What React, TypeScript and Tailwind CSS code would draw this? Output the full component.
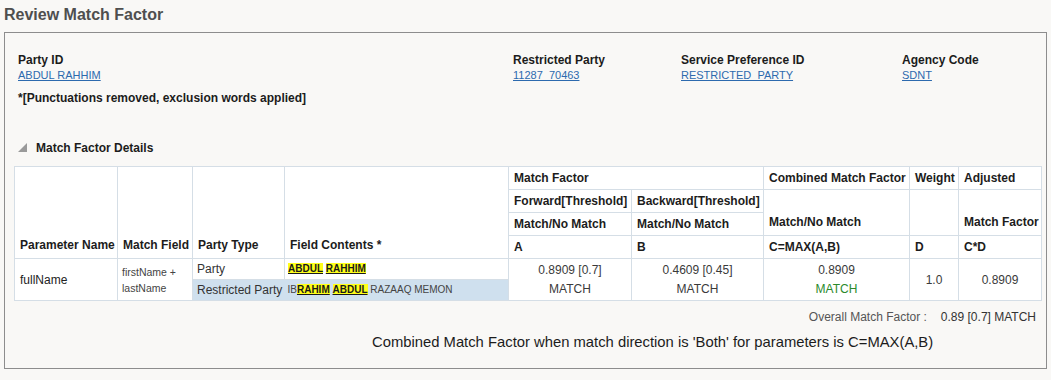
import React from "react";

const hl = "bg-[#ffff1a] font-bold underline text-[#1a1a1a] text-[10px]";

function Field({ label, value }: { label: string; value: string }) {
  return (
    <div className="flex flex-col">
      <span className="text-[12px] leading-[15px] font-bold text-[#1c1c1c]">{label}</span>
      <a href="#" className="text-[11px] leading-[14px] text-[#2d6aae] underline">
        {value}
      </a>
    </div>
  );
}

export default function App() {
  const th =
    "border border-[#d5dee6] bg-white pl-[5px] pr-0 text-left font-bold text-[12px] text-[#1c1c1c] align-bottom whitespace-nowrap overflow-visible";
  const td = "border border-[#d5dee6] bg-white";
  const num = td + " text-center text-[12px] text-[#3a3a3a]";

  return (
    <div className="w-full h-[380px] bg-[#f9f8f6] px-[4px] font-['Liberation_Sans',Arial,sans-serif] overflow-hidden">
      <div className="h-[32px] flex items-center pb-[2px]">
        <h1 className="text-[16px] font-bold text-[#4f4f4f]">Review Match Factor</h1>
      </div>

      <div className="w-[1043px] h-[337px] border border-[#8d8d8d] bg-[#f9f8f6] flex flex-col">
        <div className="flex pt-[20px] pl-[13px]">
          <div className="w-[495px]">
            <Field label="Party ID" value="ABDUL RAHHIM" />
          </div>
          <div className="w-[168px]">
            <Field label="Restricted Party" value="11287_70463" />
          </div>
          <div className="w-[221px]">
            <Field label="Service Preference ID" value="RESTRICTED_PARTY" />
          </div>
          <div>
            <Field label="Agency Code" value="SDNT" />
          </div>
        </div>

        <p className="pl-[13px] mt-[9px] text-[12px] leading-[14px] font-bold text-[#1c1c1c]">
          *[Punctuations removed, exclusion words applied]
        </p>

        <div className="flex items-center gap-[9px] pl-[13px] mt-[35px] h-[15px]">
          <svg width="9" height="9" viewBox="0 0 9 9">
            <polygon points="9,0 9,9 0,9" fill="#9a9a9a" />
          </svg>
          <span className="text-[12px] font-bold text-[#1c1c1c]">Match Factor Details</span>
        </div>

        <table className="ml-[9px] mt-[11px] w-[1027px] table-fixed border-collapse">
          <colgroup>
            <col className="w-[103px]" />
            <col className="w-[75px]" />
            <col className="w-[92px]" />
            <col className="w-[224px]" />
            <col className="w-[123px]" />
            <col className="w-[132px]" />
            <col className="w-[146px]" />
            <col className="w-[49px]" />
            <col className="w-[83px]" />
          </colgroup>
          <thead>
            <tr className="h-[23px]">
              <th rowSpan={4} className={th + " pb-[4px]"}>Parameter Name</th>
              <th rowSpan={4} className={th + " pb-[4px]"}>Match Field</th>
              <th rowSpan={4} className={th + " pb-[4px]"}>Party Type</th>
              <th rowSpan={4} className={th + " pb-[4px]"}>Field Contents *</th>
              <th colSpan={2} className={th + " align-middle"}>Match Factor</th>
              <th className={th + " align-middle"}>Combined Match Factor</th>
              <th className={th + " align-middle"}>Weight</th>
              <th className={th + " align-middle"}>Adjusted</th>
            </tr>
            <tr className="h-[23px]">
              <th className={th + " align-middle"}>Forward[Threshold]</th>
              <th className={th + " align-middle"}>Backward[Threshold]</th>
              <th rowSpan={2} className={th + " pb-[4px]"}>Match/No Match</th>
              <th rowSpan={2} className={th}></th>
              <th rowSpan={2} className={th + " pb-[4px]"}>Match Factor</th>
            </tr>
            <tr className="h-[23px]">
              <th className={th + " align-middle"}>Match/No Match</th>
              <th className={th + " align-middle"}>Match/No Match</th>
            </tr>
            <tr className="h-[23px]">
              <th className={th + " align-middle"}>A</th>
              <th className={th + " align-middle"}>B</th>
              <th className={th + " align-middle"}>C=MAX(A,B)</th>
              <th className={th + " align-middle"}>D</th>
              <th className={th + " align-middle"}>C*D</th>
            </tr>
          </thead>
          <tbody>
            <tr className="h-[21px]">
              <td rowSpan={2} className={td + " px-[5px] text-[12px] text-[#222]"}>fullName</td>
              <td rowSpan={2} className={td + " px-[4px] text-[10.5px] leading-[16px] text-[#444]"}>
                firstName +<br />lastName
              </td>
              <td className={td + " px-[4px] text-[12px] text-[#333]"}>Party</td>
              <td className={td + " px-[3px] text-[10px] leading-[14px]"}>
                <span className={hl}>ABDUL</span> <span className={hl}>RAHHIM</span>
              </td>
              <td rowSpan={2} className={num + " leading-[19px]"}>
                0.8909 [0.7]<br />MATCH
              </td>
              <td rowSpan={2} className={num + " leading-[19px]"}>
                0.4609 [0.45]<br />MATCH
              </td>
              <td rowSpan={2} className={num + " leading-[19px]"}>
                0.8909<br />
                <span className="text-[#2b8a2b]">MATCH</span>
              </td>
              <td rowSpan={2} className={num}>1.0</td>
              <td rowSpan={2} className={num}>0.8909</td>
            </tr>
            <tr className="h-[21px]">
              <td className="bg-[#cfe0ee] px-[4px] text-[12px] text-[#333] whitespace-nowrap border-b border-[#d5dee6]">
                Restricted Party
              </td>
              <td className="bg-[#cfe0ee] px-[3px] text-[10px] leading-[14px] text-[#444] border-b border-[#d5dee6]">
                IB<span className={hl}>RAHIM</span> <span className={hl}>ABDUL</span> RAZAAQ MEMON
              </td>
            </tr>
          </tbody>
        </table>

        <div className="flex justify-end items-center pr-[10px] mt-[9px] h-[14px] text-[12px]">
          <span className="text-[#555]">Overall Match Factor :</span>
          <span className="ml-[14px] text-[#333]">0.89 [0.7] MATCH</span>
        </div>

        <p className="ml-[367px] mt-[9px] text-[14.8px] leading-[19px] text-[#1c1c1c]">
          Combined Match Factor when match direction is 'Both' for parameters is C=MAX(A,B)
        </p>
      </div>
    </div>
  );
}
